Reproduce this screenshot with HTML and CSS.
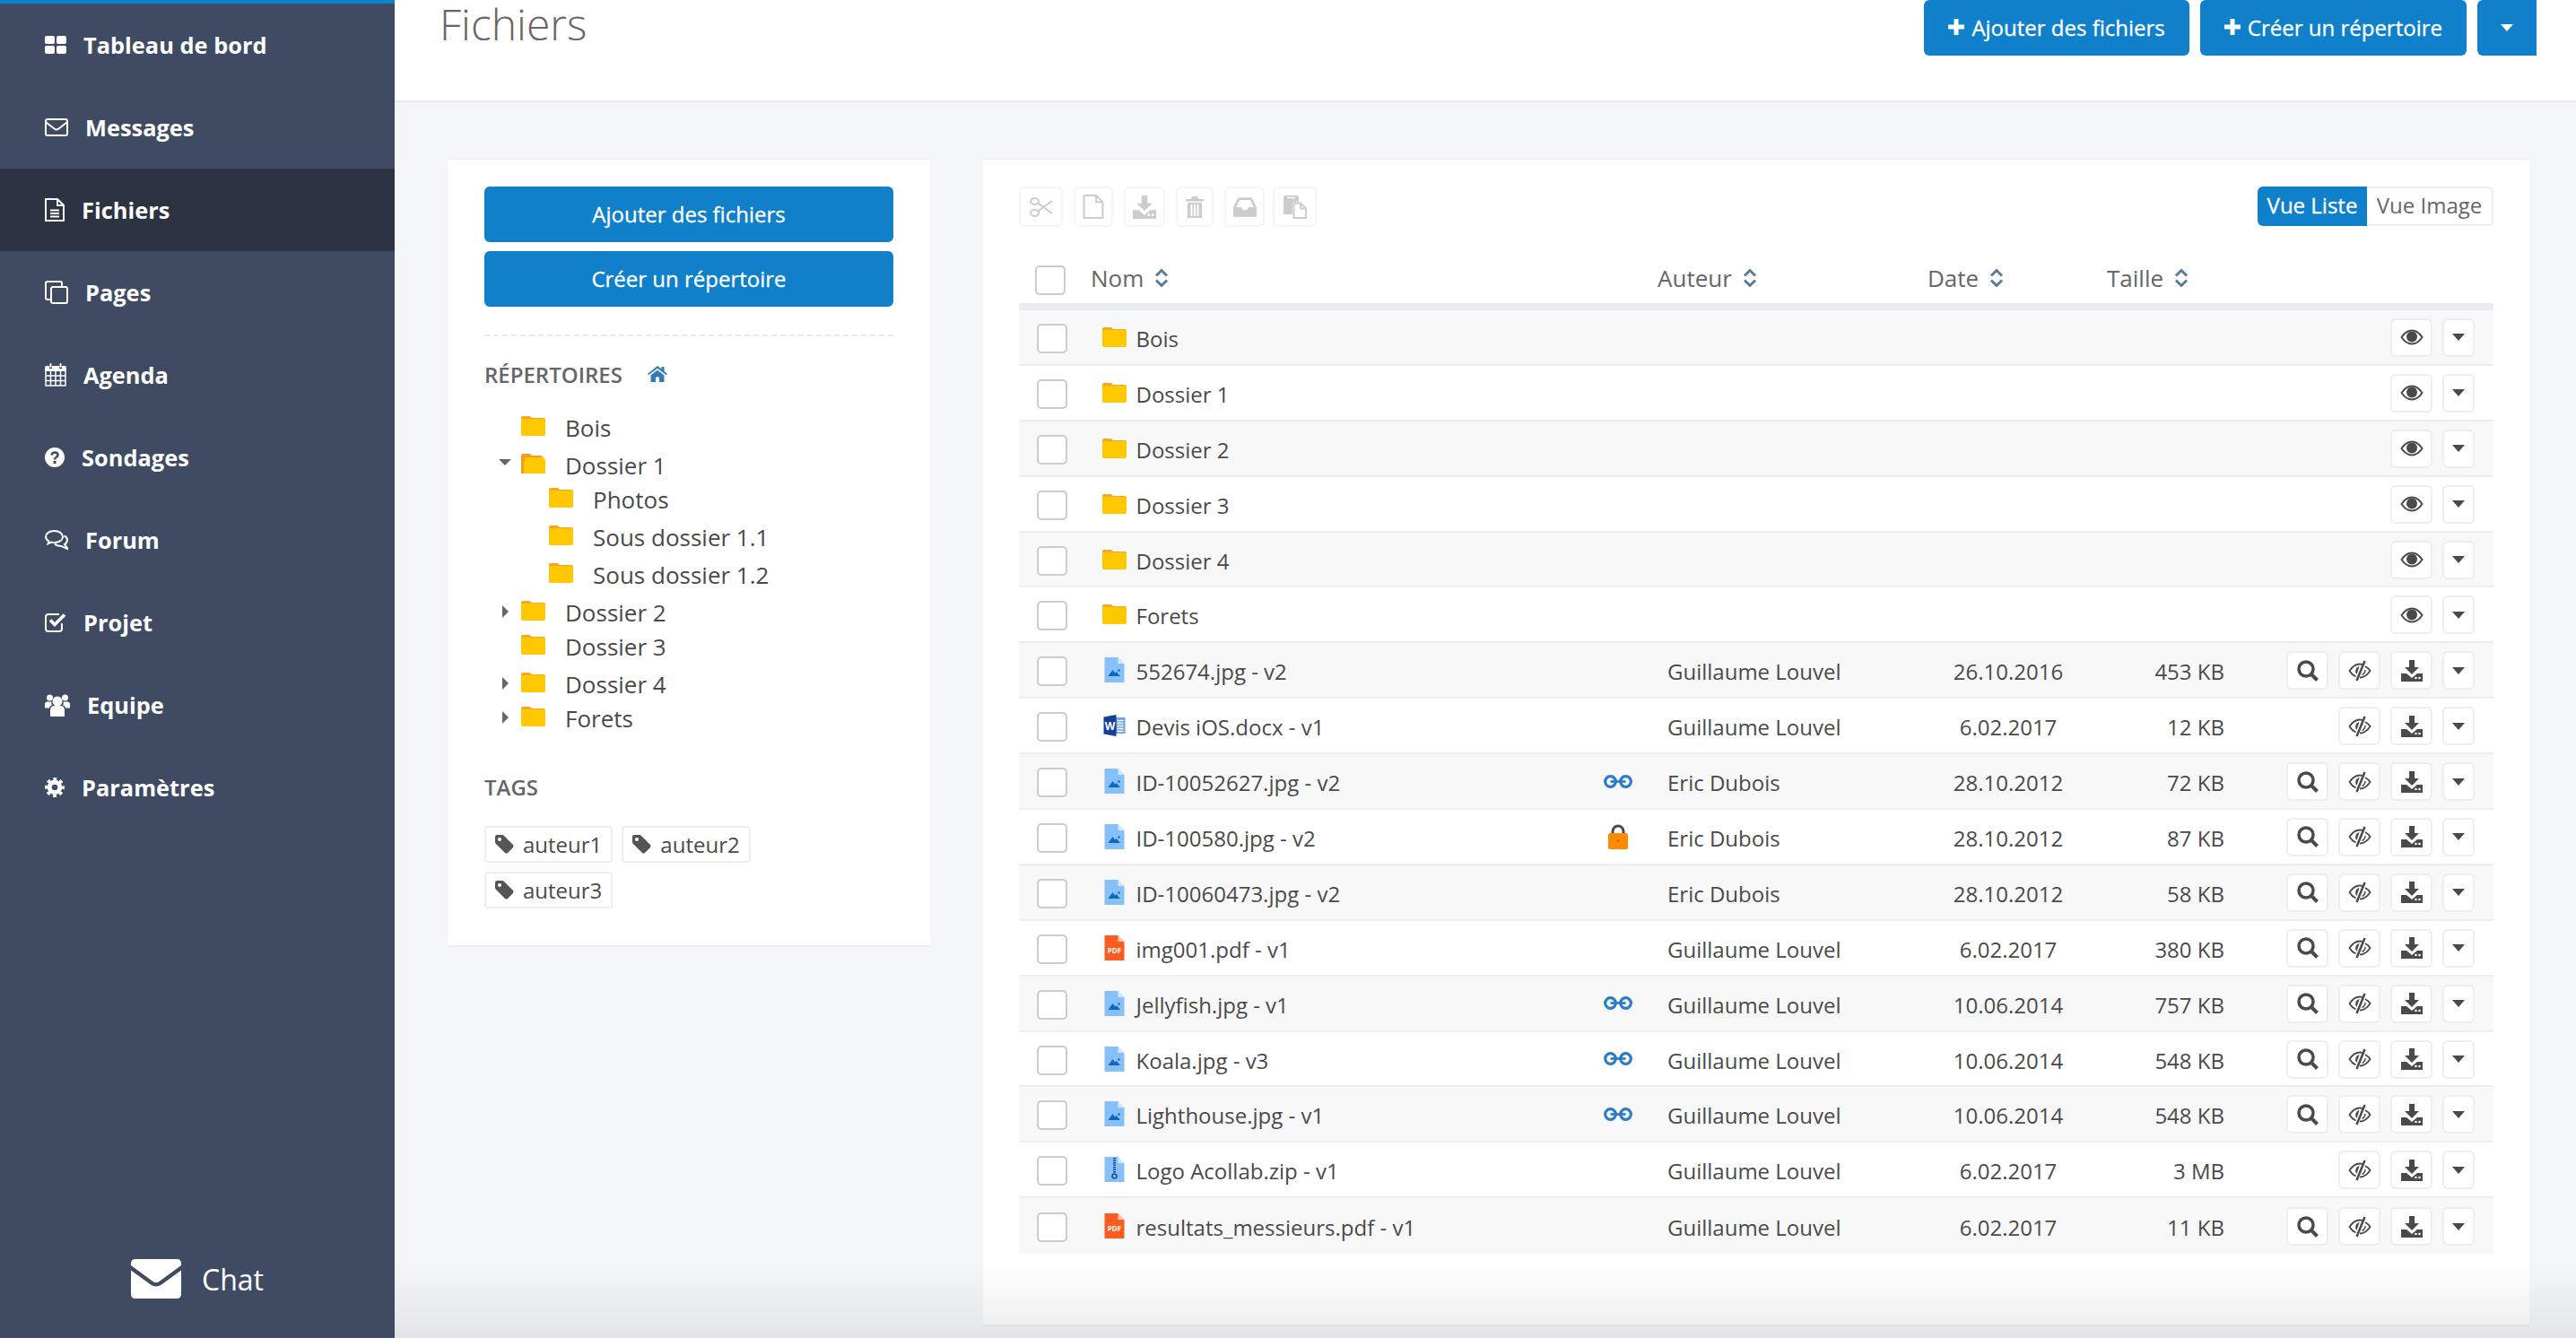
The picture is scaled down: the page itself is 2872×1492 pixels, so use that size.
FILE: index.html
```html
<!DOCTYPE html>
<html lang="fr">
<head>
    <meta charset="UTF-8">
    <title>Fichiers</title>
    <link rel="stylesheet" href="styles.css">
</head>
<body>
    <svg class="icon-defs" xmlns="http://www.w3.org/2000/svg">
        <symbol id="i-dash" viewBox="0 0 24 20"><rect width="11" height="9" rx="2"/><rect x="13" width="11" height="9" rx="2"/><rect y="11" width="11" height="9" rx="2"/><rect x="13" y="11" width="11" height="9" rx="2"/></symbol>
        <symbol id="i-mail" viewBox="0 0 26 20"><rect x="1" y="1" width="24" height="18" rx="2" fill="none" stroke="#fff" stroke-width="2"/><path d="M1.5 4.5L10.5 11.5Q13 13.5 15.5 11.5L24.5 4.5" fill="none" stroke="#fff" stroke-width="2"/></symbol>
        <symbol id="i-file" viewBox="0 0 22 26"><path d="M1 1H14L21 8V25H1Z" fill="none" stroke="#fff" stroke-width="2"/><path d="M14 1V8H21M6 13.5H16M6 17H16M6 20.5H16" fill="none" stroke="#fff" stroke-width="1.8"/></symbol>
        <symbol id="i-pages" viewBox="0 0 26 26"><path d="M6 21H3Q1 21 1 19V3Q1 1 3 1H17Q19 1 19 3V6" fill="none" stroke="#fff" stroke-width="2"/><rect x="7" y="7" width="18" height="18" rx="2" fill="none" stroke="#fff" stroke-width="2"/></symbol>
        <symbol id="i-cal" viewBox="0 0 24 26"><path d="M2 3H5V6H8V3H16V6H19V3H22Q24 3 24 5V9H0V5Q0 3 2 3Z"/><rect x="5.5" width="2" height="5" rx="1"/><rect x="16.5" width="2" height="5" rx="1"/><path d="M1 9V25H23V9M1 14H23M1 19.500H23M6.500 9V25M12 9V25M17.500 9V25" fill="none" stroke="#fff" stroke-width="1.500"/></symbol>
        <symbol id="i-help" viewBox="0 0 22 22"><circle cx="11" cy="11" r="11"/><path d="M7.500 8.500Q8 5.500 11 5.500Q14.500 5.500 14.500 8.300Q14.500 10 12.500 11Q11 11.800 11 13.500" fill="none" stroke="#3f4b63" stroke-width="2.500"/><rect x="9.500" y="15" width="3" height="3" fill="#3f4b63"/></symbol>
        <symbol id="i-forum" viewBox="0 0 26 22"><path d="M10.500 1C5 1 1 4 1 7.500C1 9.800 2.500 11.500 4.500 12.700L3.500 15.300L7.300 13.600C8.300 13.900 9.400 14 10.500 14C16 14 20 11 20 7.500C20 4 16 1 10.500 1Z" fill="none" stroke="#fff" stroke-width="2"/><path d="M21.500 6.500C24 7.500 25 9.500 25 11.300C25 13.300 23.800 15 22 16L26 21.500L18.500 18C15 18 12.500 17 11 15.500" fill="none" stroke="#fff" stroke-width="2"/></symbol>
        <symbol id="i-check" viewBox="0 0 24 22"><path d="M19 12V18Q19 21 16 21H4Q1 21 1 18V5Q1 2 4 2H16" fill="none" stroke="#fff" stroke-width="2"/><path d="M6 8.500L11 13.500L22 2.500" fill="none" stroke="#fff" stroke-width="3.600"/></symbol>
        <symbol id="i-team" viewBox="0 0 28 26"><circle cx="14" cy="9" r="5.500"/><circle cx="5.500" cy="5" r="3.500"/><circle cx="22.500" cy="5" r="3.500"/><path d="M6 26V19Q6 14 11 14H17Q22 14 22 19V26Z"/><path d="M5 16.500H0V12.500Q0 9.500 3 9.500H7.500Q7 13 8 13.500Q5 14 5 16.500ZM23 16.500H28V12.500Q28 9.500 25 9.500H20.500Q21 13 20 13.500Q23 14 23 16.500Z"/></symbol>
        <symbol id="i-cog" viewBox="0 0 22 22"><circle cx="11" cy="11" r="5.800" fill="none" stroke="#fff" stroke-width="5"/><circle cx="11" cy="11" r="9.300" fill="none" stroke="#fff" stroke-width="3.400" stroke-dasharray="3.800 3.500" stroke-dashoffset="1.900"/></symbol>
        <symbol id="i-folder" viewBox="0 0 27 22"><path d="M0 2Q0 0 2 0H9Q10.500 0 12 2H25Q27 2 27 4V8H0Z" fill="#f5a623"/><path d="M0 3H25Q27 3 27 5V20Q27 22 25 22H1.500Q0 22 0 20Z" fill="#ffc800"/></symbol>
        <symbol id="i-folder-open" viewBox="0 0 27 22"><path d="M0 2Q0 0 2 0H9Q10.500 0 12 2H22Q24 2 24 4V8H0V22H0Z" fill="#f79a1e"/><path d="M0 22V8Q1 4 5 4H23Q27 4 27 9V22Z" fill="#ffc800"/><path d="M0 22V5H6Q3 7 3 12V22Z" fill="#f79a1e"/></symbol>
        <symbol id="i-img" viewBox="0 0 22 28"><path d="M0 0H15L22 7V28H0Z" fill="#86c0f8"/><path d="M15 0L22 7H15Z" fill="#d6e9fc"/><path d="M4 21L9 14L11.500 17.500L13 16L17.500 21Z" fill="#1565c0"/><circle cx="16" cy="14.500" r="1.200" fill="#1565c0"/></symbol>
        <symbol id="i-zip" viewBox="0 0 22 28"><path d="M0 0H15L22 7V28H0Z" fill="#86c0f8"/><path d="M15 0L22 7H15Z" fill="#d6e9fc"/><path d="M11 1V18" fill="none" stroke="#1d4f9c" stroke-width="3" stroke-dasharray="1.500 1"/><circle cx="11" cy="21.500" r="2.500" fill="none" stroke="#1d4f9c" stroke-width="1.600"/></symbol>
        <symbol id="i-pdf" viewBox="0 0 22 28"><path d="M0 0H15L22 7V28H0Z" fill="#ff5a1f"/><path d="M15 0L22 7H15Z" fill="#ffc9b3"/><text x="11" y="19.500" text-anchor="middle" font-family="Open Sans" font-weight="700" font-size="8" fill="#fff">PDF</text></symbol>
        <symbol id="i-word" viewBox="0 0 24 24"><path d="M8 3H24V21H8Z" fill="#6f9fe0"/><path d="M15 6.500H22M15 9.500H22M15 12.500H22M15 15.500H22M15 18.500H22" stroke="#fff" stroke-width="1.300"/><path d="M0 2.500L14 0V24L0 21.500Z" fill="#123f9b"/><text x="7" y="16.500" text-anchor="middle" font-family="Open Sans" font-weight="700" font-size="12" fill="#fff">W</text></symbol>
        <symbol id="i-home" viewBox="0 0 22 18"><path d="M11 0L15.500 3.500V1H18.500V6L22 9L20.800 10.300L11 2.700L1.200 10.300L0 9Z"/><path d="M3.500 10.500L11 4.700L18.500 10.500V18H13V12.500H9V18H3.500Z"/></symbol>
        <symbol id="i-tag" viewBox="0 0 21 21"><path d="M0 2Q0 0 2 0H8Q9 0 10 1L20 11Q21 12.500 20 14L14 20Q12.500 21 11 20L1 10Q0 9 0 8Z"/><circle cx="5" cy="5" r="2" fill="#fff"/></symbol>
        <symbol id="i-sort" viewBox="0 0 16 22"><path d="M2 8.500L8 2.500L14 8.500M2 13.500L8 19.500L14 13.500" fill="none" stroke="#5b7b96" stroke-width="3"/></symbol>
        <symbol id="i-link" viewBox="0 0 32 14"><circle cx="8" cy="7" r="5.500" fill="none" stroke="#2a7cc7" stroke-width="3"/><circle cx="24" cy="7" r="5.500" fill="none" stroke="#2a7cc7" stroke-width="3"/><path d="M8 7H24" stroke="#2a7cc7" stroke-width="2.500"/></symbol>
        <symbol id="i-lock" viewBox="0 0 22 28"><path d="M5 11V8A6 6 0 0 1 17 8V11" fill="none" stroke="#4a4a4a" stroke-width="3"/><rect y="10" width="22" height="18" rx="2" fill="#ff8c00"/><circle cx="11" cy="18.500" r="1.500" fill="#c96a00"/></symbol>
        <symbol id="i-eye" viewBox="0 0 26 18"><path d="M1.500 9Q6.500 1.500 13 1.500Q19.500 1.500 24.500 9Q19.500 16.500 13 16.500Q6.500 16.500 1.500 9Z" fill="none" stroke="#4a4a4a" stroke-width="2"/><circle cx="13" cy="8.500" r="6"/></symbol>
        <symbol id="i-eye-off" viewBox="0 0 26 24"><path d="M8.500 18.500Q4 16.500 1.500 12Q6.500 4.500 13 4.500Q14.500 4.500 16 5M19 7Q22.500 9 24.500 12Q19.500 19.500 13 19.500" fill="none" stroke="#4a4a4a" stroke-width="1.800"/><path d="M12.500 7A5.500 5.500 0 0 0 9.500 16Z"/><path d="M19 11Q19 14.500 15.500 16.500" fill="none" stroke="#4a4a4a" stroke-width="1.500"/><path d="M18.500 1L9.500 23" stroke="#4a4a4a" stroke-width="2.500"/></symbol>
        <symbol id="i-download" viewBox="0 0 24 24"><path d="M9 0H15V8H20L12 16L4 8H9Z"/><path d="M0 15H6L12 20L18 15H24V24H0Z"/><circle cx="16.500" cy="20" r="1.300" fill="#fff"/><circle cx="20.500" cy="20" r="1.300" fill="#fff"/></symbol>
        <symbol id="i-search" viewBox="0 0 24 24"><circle cx="10" cy="10" r="8" fill="none" stroke="#4a4a4a" stroke-width="3.500"/><path d="M15.500 15.500L22.500 22.500" stroke="#4a4a4a" stroke-width="4"/></symbol>
        <symbol id="i-caret" viewBox="0 0 14 8"><path d="M0 0H14L7 8Z"/></symbol>
        <symbol id="i-plus" viewBox="0 0 18 18"><path d="M6.500 0H11.500V6.500H18V11.500H11.500V18H6.500V11.500H0V6.500H6.500Z"/></symbol>
        <symbol id="i-cut" viewBox="0 0 26 24"><ellipse cx="5.500" cy="5.500" rx="4.500" ry="3.500" fill="none" stroke="#ccc" stroke-width="2"/><ellipse cx="5.500" cy="18.500" rx="4.500" ry="3.500" fill="none" stroke="#ccc" stroke-width="2"/><path d="M9 7.500L25 19M9 16.500L25 5" fill="none" stroke="#ccc" stroke-width="2"/></symbol>
        <symbol id="i-blank" viewBox="0 0 22 26"><path d="M1 1H14L21 8V25H1Z" fill="none" stroke="#ccc" stroke-width="2"/><path d="M14 1V8H21" fill="none" stroke="#ccc" stroke-width="2"/></symbol>
        <symbol id="i-trash" viewBox="0 0 20 24"><path d="M7 0H13L14 3H20V5.500H0V3H6Z"/><path d="M2 7H18V24H2ZM5.500 9V22H7.500V9ZM9 9V22H11V9ZM12.500 9V22H14.500V9Z" fill-rule="evenodd"/></symbol>
        <symbol id="i-inbox" viewBox="0 0 24 20"><path d="M5 0H19L24 10V20H0V10ZM6.500 2.500L3 10H8L10 13H14L16 10H21L17.500 2.500Z" fill-rule="evenodd"/></symbol>
        <symbol id="i-paste" viewBox="0 0 26 26"><path d="M0 2Q0 0 2 0H15Q17 0 17 2V7H10V21H0Z"/><path d="M4 2.500H13" stroke="#fff" stroke-width="1.500"/><path d="M11.500 8.500H19L25 14.500V25H11.500Z" fill="#fff" stroke="#ccc" stroke-width="2"/><path d="M19 8.500V14.500H25" fill="none" stroke="#ccc" stroke-width="2"/></symbol>
        <symbol id="i-chat" viewBox="0 0 56 44"><path d="M5 0H51Q56 0 56 5V7L31.500 25Q28 27.500 24.500 25L0 7V5Q0 0 5 0Z"/><path d="M0 12.500L22 28.500Q28 32.500 34 28.500L56 12.500V39Q56 44 51 44H5Q0 44 0 39Z"/></symbol>
    </svg>

    <div class="app">
        <aside class="sidebar">
            <nav class="side-nav">
                <a class="side-item"><svg class="side-icon w24"><use href="#i-dash"/></svg>Tableau de bord</a>
                <a class="side-item"><svg class="side-icon w26"><use href="#i-mail"/></svg>Messages</a>
                <a class="side-item active"><svg class="side-icon w22"><use href="#i-file"/></svg>Fichiers</a>
                <a class="side-item"><svg class="side-icon w26"><use href="#i-pages"/></svg>Pages</a>
                <a class="side-item"><svg class="side-icon w24"><use href="#i-cal"/></svg>Agenda</a>
                <a class="side-item"><svg class="side-icon w22"><use href="#i-help"/></svg>Sondages</a>
                <a class="side-item"><svg class="side-icon w26"><use href="#i-forum"/></svg>Forum</a>
                <a class="side-item"><svg class="side-icon w24"><use href="#i-check"/></svg>Projet</a>
                <a class="side-item"><svg class="side-icon w28"><use href="#i-team"/></svg>Equipe</a>
                <a class="side-item"><svg class="side-icon w22"><use href="#i-cog"/></svg>Paramètres</a>
            </nav>
            <div class="chat"><svg class="chat-icon"><use href="#i-chat"/></svg>Chat</div>
        </aside>

        <main class="main">
            <header class="page-head">
                <h1>Fichiers</h1>
                <div class="head-actions">
                    <button class="btn"><svg class="plus"><use href="#i-plus"/></svg>Ajouter des fichiers</button>
                    <button class="btn"><svg class="plus"><use href="#i-plus"/></svg>Créer un répertoire</button>
                    <button class="btn btn-caret"><svg class="caret-icon"><use href="#i-caret"/></svg></button>
                </div>
            </header>

            <div class="content">
                <section class="card side-card">
                    <button class="btn btn-block">Ajouter des fichiers</button>
                    <button class="btn btn-block">Créer un répertoire</button>
                    <div class="dash-line"></div>

                    <h3 class="side-title">Répertoires <svg class="home"><use href="#i-home"/></svg></h3>
                    <ul class="tree">
                        <li class="tree-row"><svg class="folder"><use href="#i-folder"/></svg>Bois</li>
                        <li class="tree-row gap"><i class="tree-down"></i><svg class="folder"><use href="#i-folder-open"/></svg>Dossier 1</li>
                        <li class="tree-row sub"><svg class="folder"><use href="#i-folder"/></svg>Photos</li>
                        <li class="tree-row sub gap"><svg class="folder"><use href="#i-folder"/></svg>Sous dossier 1.1</li>
                        <li class="tree-row sub gap"><svg class="folder"><use href="#i-folder"/></svg>Sous dossier 1.2</li>
                        <li class="tree-row gap"><i class="tree-right"></i><svg class="folder"><use href="#i-folder"/></svg>Dossier 2</li>
                        <li class="tree-row"><svg class="folder"><use href="#i-folder"/></svg>Dossier 3</li>
                        <li class="tree-row gap"><i class="tree-right"></i><svg class="folder"><use href="#i-folder"/></svg>Dossier 4</li>
                        <li class="tree-row"><i class="tree-right"></i><svg class="folder"><use href="#i-folder"/></svg>Forets</li>
                    </ul>

                    <h3 class="side-title tags-title">Tags</h3>
                    <div class="tags">
                        <span class="tag"><svg class="tag-icon"><use href="#i-tag"/></svg>auteur1</span>
                        <span class="tag"><svg class="tag-icon"><use href="#i-tag"/></svg>auteur2</span>
                        <span class="tag"><svg class="tag-icon"><use href="#i-tag"/></svg>auteur3</span>
                    </div>
                </section>

                <section class="card list-card">
                    <div class="toolbar">
                        <div class="tools">
                            <span class="tool t1"><svg class="tool-icon"><use href="#i-cut"/></svg></span>
                            <span class="tool t2"><svg class="tool-icon"><use href="#i-blank"/></svg></span>
                            <span class="tool t3"><svg class="tool-icon"><use href="#i-download"/></svg></span>
                            <span class="tool t4"><svg class="tool-icon"><use href="#i-trash"/></svg></span>
                            <span class="tool t5"><svg class="tool-icon"><use href="#i-inbox"/></svg></span>
                            <span class="tool t6"><svg class="tool-icon"><use href="#i-paste"/></svg></span>
                        </div>
                        <div class="switch">
                            <span class="switch-on">Vue Liste</span>
                            <span class="switch-off">Vue Image</span>
                        </div>
                    </div>

                    <div class="list-head">
                        <span class="box head-box"></span>
                        <span class="th">Nom <svg class="sort"><use href="#i-sort"/></svg></span>
                        <span class="th">Auteur <svg class="sort"><use href="#i-sort"/></svg></span>
                        <span class="th">Date <svg class="sort"><use href="#i-sort"/></svg></span>
                        <span class="th">Taille <svg class="sort"><use href="#i-sort"/></svg></span>
                    </div>

                    <div class="rows">
                        <div class="row">
                            <span class="box"></span>
                            <span class="name"><svg class="kind"><use href="#i-folder"/></svg>Bois</span>
                            <span></span><span></span><span></span><span></span>
                            <span class="acts"><b class="act"><svg class="eye"><use href="#i-eye"/></svg></b><b class="act act-c"><svg class="caret-icon"><use href="#i-caret"/></svg></b></span>
                        </div>
                        <div class="row">
                            <span class="box"></span>
                            <span class="name"><svg class="kind"><use href="#i-folder"/></svg>Dossier 1</span>
                            <span></span><span></span><span></span><span></span>
                            <span class="acts"><b class="act"><svg class="eye"><use href="#i-eye"/></svg></b><b class="act act-c"><svg class="caret-icon"><use href="#i-caret"/></svg></b></span>
                        </div>
                        <div class="row">
                            <span class="box"></span>
                            <span class="name"><svg class="kind"><use href="#i-folder"/></svg>Dossier 2</span>
                            <span></span><span></span><span></span><span></span>
                            <span class="acts"><b class="act"><svg class="eye"><use href="#i-eye"/></svg></b><b class="act act-c"><svg class="caret-icon"><use href="#i-caret"/></svg></b></span>
                        </div>
                        <div class="row">
                            <span class="box"></span>
                            <span class="name"><svg class="kind"><use href="#i-folder"/></svg>Dossier 3</span>
                            <span></span><span></span><span></span><span></span>
                            <span class="acts"><b class="act"><svg class="eye"><use href="#i-eye"/></svg></b><b class="act act-c"><svg class="caret-icon"><use href="#i-caret"/></svg></b></span>
                        </div>
                        <div class="row">
                            <span class="box"></span>
                            <span class="name"><svg class="kind"><use href="#i-folder"/></svg>Dossier 4</span>
                            <span></span><span></span><span></span><span></span>
                            <span class="acts"><b class="act"><svg class="eye"><use href="#i-eye"/></svg></b><b class="act act-c"><svg class="caret-icon"><use href="#i-caret"/></svg></b></span>
                        </div>
                        <div class="row">
                            <span class="box"></span>
                            <span class="name"><svg class="kind"><use href="#i-folder"/></svg>Forets</span>
                            <span></span><span></span><span></span><span></span>
                            <span class="acts"><b class="act"><svg class="eye"><use href="#i-eye"/></svg></b><b class="act act-c"><svg class="caret-icon"><use href="#i-caret"/></svg></b></span>
                        </div>
                        <div class="row">
                            <span class="box"></span>
                            <span class="name"><svg class="kind file"><use href="#i-img"/></svg>552674.jpg - v2</span>
                            <span></span>
                            <span class="author">Guillaume Louvel</span><span class="date">26.10.2016</span><span class="size">453 KB</span>
                            <span class="acts"><b class="act"><svg class="mag"><use href="#i-search"/></svg></b><b class="act"><svg class="eye-off"><use href="#i-eye-off"/></svg></b><b class="act"><svg class="dl"><use href="#i-download"/></svg></b><b class="act act-c"><svg class="caret-icon"><use href="#i-caret"/></svg></b></span>
                        </div>
                        <div class="row">
                            <span class="box"></span>
                            <span class="name"><svg class="kind word"><use href="#i-word"/></svg>Devis iOS.docx - v1</span>
                            <span></span>
                            <span class="author">Guillaume Louvel</span><span class="date">6.02.2017</span><span class="size">12 KB</span>
                            <span class="acts"><b class="act"><svg class="eye-off"><use href="#i-eye-off"/></svg></b><b class="act"><svg class="dl"><use href="#i-download"/></svg></b><b class="act act-c"><svg class="caret-icon"><use href="#i-caret"/></svg></b></span>
                        </div>
                        <div class="row">
                            <span class="box"></span>
                            <span class="name"><svg class="kind file"><use href="#i-img"/></svg>ID-10052627.jpg - v2</span>
                            <span class="flag"><svg class="link"><use href="#i-link"/></svg></span>
                            <span class="author">Eric Dubois</span><span class="date">28.10.2012</span><span class="size">72 KB</span>
                            <span class="acts"><b class="act"><svg class="mag"><use href="#i-search"/></svg></b><b class="act"><svg class="eye-off"><use href="#i-eye-off"/></svg></b><b class="act"><svg class="dl"><use href="#i-download"/></svg></b><b class="act act-c"><svg class="caret-icon"><use href="#i-caret"/></svg></b></span>
                        </div>
                        <div class="row">
                            <span class="box"></span>
                            <span class="name"><svg class="kind file"><use href="#i-img"/></svg>ID-100580.jpg - v2</span>
                            <span class="flag"><svg class="lock"><use href="#i-lock"/></svg></span>
                            <span class="author">Eric Dubois</span><span class="date">28.10.2012</span><span class="size">87 KB</span>
                            <span class="acts"><b class="act"><svg class="mag"><use href="#i-search"/></svg></b><b class="act"><svg class="eye-off"><use href="#i-eye-off"/></svg></b><b class="act"><svg class="dl"><use href="#i-download"/></svg></b><b class="act act-c"><svg class="caret-icon"><use href="#i-caret"/></svg></b></span>
                        </div>
                        <div class="row">
                            <span class="box"></span>
                            <span class="name"><svg class="kind file"><use href="#i-img"/></svg>ID-10060473.jpg - v2</span>
                            <span></span>
                            <span class="author">Eric Dubois</span><span class="date">28.10.2012</span><span class="size">58 KB</span>
                            <span class="acts"><b class="act"><svg class="mag"><use href="#i-search"/></svg></b><b class="act"><svg class="eye-off"><use href="#i-eye-off"/></svg></b><b class="act"><svg class="dl"><use href="#i-download"/></svg></b><b class="act act-c"><svg class="caret-icon"><use href="#i-caret"/></svg></b></span>
                        </div>
                        <div class="row">
                            <span class="box"></span>
                            <span class="name"><svg class="kind file"><use href="#i-pdf"/></svg>img001.pdf - v1</span>
                            <span></span>
                            <span class="author">Guillaume Louvel</span><span class="date">6.02.2017</span><span class="size">380 KB</span>
                            <span class="acts"><b class="act"><svg class="mag"><use href="#i-search"/></svg></b><b class="act"><svg class="eye-off"><use href="#i-eye-off"/></svg></b><b class="act"><svg class="dl"><use href="#i-download"/></svg></b><b class="act act-c"><svg class="caret-icon"><use href="#i-caret"/></svg></b></span>
                        </div>
                        <div class="row">
                            <span class="box"></span>
                            <span class="name"><svg class="kind file"><use href="#i-img"/></svg>Jellyfish.jpg - v1</span>
                            <span class="flag"><svg class="link"><use href="#i-link"/></svg></span>
                            <span class="author">Guillaume Louvel</span><span class="date">10.06.2014</span><span class="size">757 KB</span>
                            <span class="acts"><b class="act"><svg class="mag"><use href="#i-search"/></svg></b><b class="act"><svg class="eye-off"><use href="#i-eye-off"/></svg></b><b class="act"><svg class="dl"><use href="#i-download"/></svg></b><b class="act act-c"><svg class="caret-icon"><use href="#i-caret"/></svg></b></span>
                        </div>
                        <div class="row">
                            <span class="box"></span>
                            <span class="name"><svg class="kind file"><use href="#i-img"/></svg>Koala.jpg - v3</span>
                            <span class="flag"><svg class="link"><use href="#i-link"/></svg></span>
                            <span class="author">Guillaume Louvel</span><span class="date">10.06.2014</span><span class="size">548 KB</span>
                            <span class="acts"><b class="act"><svg class="mag"><use href="#i-search"/></svg></b><b class="act"><svg class="eye-off"><use href="#i-eye-off"/></svg></b><b class="act"><svg class="dl"><use href="#i-download"/></svg></b><b class="act act-c"><svg class="caret-icon"><use href="#i-caret"/></svg></b></span>
                        </div>
                        <div class="row">
                            <span class="box"></span>
                            <span class="name"><svg class="kind file"><use href="#i-img"/></svg>Lighthouse.jpg - v1</span>
                            <span class="flag"><svg class="link"><use href="#i-link"/></svg></span>
                            <span class="author">Guillaume Louvel</span><span class="date">10.06.2014</span><span class="size">548 KB</span>
                            <span class="acts"><b class="act"><svg class="mag"><use href="#i-search"/></svg></b><b class="act"><svg class="eye-off"><use href="#i-eye-off"/></svg></b><b class="act"><svg class="dl"><use href="#i-download"/></svg></b><b class="act act-c"><svg class="caret-icon"><use href="#i-caret"/></svg></b></span>
                        </div>
                        <div class="row">
                            <span class="box"></span>
                            <span class="name"><svg class="kind file"><use href="#i-zip"/></svg>Logo Acollab.zip - v1</span>
                            <span></span>
                            <span class="author">Guillaume Louvel</span><span class="date">6.02.2017</span><span class="size">3 MB</span>
                            <span class="acts"><b class="act"><svg class="eye-off"><use href="#i-eye-off"/></svg></b><b class="act"><svg class="dl"><use href="#i-download"/></svg></b><b class="act act-c"><svg class="caret-icon"><use href="#i-caret"/></svg></b></span>
                        </div>
                        <div class="row">
                            <span class="box"></span>
                            <span class="name"><svg class="kind file"><use href="#i-pdf"/></svg>resultats_messieurs.pdf - v1</span>
                            <span></span>
                            <span class="author">Guillaume Louvel</span><span class="date">6.02.2017</span><span class="size">11 KB</span>
                            <span class="acts"><b class="act"><svg class="mag"><use href="#i-search"/></svg></b><b class="act"><svg class="eye-off"><use href="#i-eye-off"/></svg></b><b class="act"><svg class="dl"><use href="#i-download"/></svg></b><b class="act act-c"><svg class="caret-icon"><use href="#i-caret"/></svg></b></span>
                        </div>
                    </div>
                </section>
            </div>
            <div class="bottom-fade"></div>
        </main>
    </div>
</body>
</html>
```

FILE: styles.css
```css
* {
    box-sizing: border-box;
}

body {
    margin: 0;
    height: 1492px;
    overflow: hidden;
    font-family: "Open Sans", "Noto Sans", sans-serif;
    color: #4a4a4a;
    background: #f4f6f9;
}

.icon-defs {
    display: none;
}

svg {
    fill: currentColor;
    flex: none;
}

.app {
    display: flex;
    height: 1492px;
}

/* sidebar */
.sidebar {
    width: 440px;
    flex: none;
    display: flex;
    flex-direction: column;
    background: #3f4b63;
    border-top: 4px solid #0d82cc;
    color: #fff;
}

.side-item {
    display: flex;
    align-items: center;
    gap: 19px;
    height: 92px;
    padding-left: 50px;
    font-size: 25.4px;
    font-weight: 700;
}

.side-item.active {
    background: #2c3342;
}

.side-icon {
    height: 26px;
}

.w22 { width: 22px; }
.w24 { width: 24px; }
.w26 { width: 26px; }
.w28 { width: 28px; }

.chat {
    margin-top: auto;
    padding-bottom: 44px;
    display: flex;
    align-items: center;
    justify-content: center;
    gap: 23px;
    font-size: 32px;
}

.chat-icon {
    width: 56px;
    height: 44px;
}

/* main area */
.main {
    flex: 1;
    position: relative;
    min-width: 0;
}

.page-head {
    height: 114px;
    display: flex;
    justify-content: space-between;
    background: #fff;
    border-bottom: 2px solid #e8eaee;
    padding: 0 44px 0 50px;
}

.page-head h1 {
    margin: 0;
    font-size: 48px;
    line-height: 54px;
    font-weight: 300;
    color: #666;
}

.head-actions {
    display: flex;
    gap: 12px;
}

.btn {
    height: 62px;
    padding: 0 27px 2px;
    border: 0;
    border-radius: 6px;
    background: #1080ca;
    color: #fff;
    font-family: inherit;
    font-size: 24px;
    -webkit-text-stroke: 0.3px #fff;
    display: flex;
    align-items: center;
    justify-content: center;
    gap: 8px;
}

.btn-caret {
    width: 66px;
    padding: 0;
    border-radius: 6px 0 0 6px;
}

.btn-block {
    width: 100%;
    margin-bottom: 10px;
}

.plus {
    width: 18px;
    height: 18px;
}

.caret-icon {
    width: 14px;
    height: 8px;
}

.content {
    display: flex;
    align-items: flex-start;
    gap: 59px;
    padding: 63px 52px 0 60px;
}

.card {
    background: #fff;
    border-top: 1px solid #eceef2;
    border-bottom: 2px solid #eceef2;
}

/* left column */
.side-card {
    width: 537px;
    height: 879px;
    flex: none;
    padding: 30px 41px 0 40px;
}

.dash-line {
    margin-top: 31px;
    border-top: 2px dashed #e8e8e8;
}

.side-title {
    margin: 22px 0 0;
    height: 40px;
    display: flex;
    align-items: center;
    font-size: 24px;
    font-weight: 600;
    color: #666;
    text-transform: uppercase;
}

.home {
    width: 22px;
    height: 18px;
    margin-left: 28px;
    color: #337ab7;
}

.tree {
    list-style: none;
    margin: 21px 0 0;
    padding: 0;
}

.tree-row {
    position: relative;
    display: flex;
    align-items: center;
    gap: 22px;
    height: 38px;
    padding-left: 41px;
    font-size: 26px;
    line-height: 38px;
}

.tree-row.sub {
    padding-left: 72px;
}

.tree-row.gap {
    margin-top: 4px;
}

.folder {
    width: 27px;
    height: 22px;
    margin-top: -4px;
}

.tree-down,
.tree-right {
    position: absolute;
    width: 0;
    height: 0;
}

.tree-down {
    left: 16px;
    top: 12px;
    border-left: 7px solid transparent;
    border-right: 7px solid transparent;
    border-top: 7px solid #666;
}

.tree-right {
    left: 20px;
    top: 11px;
    border-top: 7px solid transparent;
    border-bottom: 7px solid transparent;
    border-left: 7px solid #666;
}

.side-title.tags-title {
    margin-top: 37px;
}

.tags {
    display: flex;
    flex-wrap: wrap;
    gap: 10px;
    margin-top: 24px;
    width: 320px;
}

.tag {
    display: flex;
    align-items: center;
    gap: 10px;
    height: 41px;
    padding: 0 10px;
    border: 2px solid #eee;
    border-radius: 4px;
    font-size: 24px;
}

.tag-icon {
    width: 21px;
    height: 21px;
    color: #555;
}

/* right column */
.list-card {
    flex: 1;
    height: 1302px;
    padding: 30px 40px 0;
}

.toolbar {
    display: flex;
    justify-content: space-between;
    height: 45px;
}

.tools {
    display: flex;
    gap: 12px;
}

.tool {
    height: 45px;
    display: flex;
    align-items: center;
    justify-content: center;
    border: 2px solid #f5f5f5;
    border-radius: 6px;
    color: #ccc;
}

.tool-icon {
    width: 26px;
    height: 26px;
}

.t1 { width: 49px; }
.t2 { width: 44px; }
.t3 { width: 46px; }
.t4 { width: 42px; }
.t5 { width: 45px; }
.t6 { width: 49px; margin-left: -3px; }

.t4 .tool-icon {
    height: 24px;
}

.t2 .tool-icon {
    height: 27px;
}

.switch {
    display: flex;
    height: 44px;
    font-size: 24px;
    line-height: 42px;
}

.switch-on {
    width: 122px;
    text-align: center;
    background: #1080ca;
    color: #fff;
    -webkit-text-stroke: 0.3px #fff;
    border-radius: 6px 0 0 6px;
}

.switch-off {
    width: 141px;
    text-align: center;
    line-height: 38px;
    border: 2px solid #eee;
    border-left: 0;
    border-radius: 0 6px 6px 0;
    color: #666;
}

.list-head {
    display: grid;
    grid-template-columns: 80px 632px 301px 200px 1fr;
    align-items: center;
    height: 58px;
    margin-top: 27px;
    padding-top: 2px;
    font-size: 26px;
    color: #666;
}

.th {
    display: flex;
    align-items: center;
    gap: 12px;
}

.sort {
    width: 16px;
    height: 22px;
}

.box {
    display: block;
    width: 34px;
    height: 33px;
    margin-left: 20px;
    background: #fff;
    border: 2px solid #ccc;
    border-radius: 5px;
}

.head-box {
    margin-left: 18px;
    margin-top: 4px;
}

.rows {
    border-top: 8px solid #e9edf0;
}

.row {
    display: grid;
    grid-template-columns: 93px 541px 68px 302px 198px 142px 300px;
    align-items: center;
    height: 61.9px;
    padding-top: 3px;
    border-bottom: 2px solid #eee;
    font-size: 24px;
}

.row:nth-child(odd) {
    background: #f8f8f8;
}

.row:last-child {
    border-bottom: 0;
}

.name {
    display: flex;
    align-items: center;
    gap: 10.5px;
}

.kind {
    width: 27px;
    height: 22px;
    margin-top: -3px;
}

.kind.file {
    height: 28px;
}

.kind.word {
    height: 24px;
}

.flag {
    display: flex;
    justify-content: center;
    margin-top: -3px;
}

.link {
    width: 34px;
    height: 15px;
}

.lock {
    width: 22px;
    height: 28px;
}

.author {
    padding-left: 21px;
}

.date {
    text-align: center;
}

.size {
    text-align: right;
}

.acts {
    display: flex;
    justify-content: flex-end;
    align-items: center;
    gap: 11px;
    margin-top: -2px;
    padding-right: 21px;
}

.act {
    width: 47px;
    height: 43px;
    display: flex;
    align-items: center;
    justify-content: center;
    background: #fff;
    border: 2px solid #eee;
    border-radius: 6px;
}

.act-c {
    width: 36px;
}

.eye {
    width: 26px;
    height: 18px;
}

.eye-off {
    width: 26px;
    height: 24px;
}

.dl {
    width: 24px;
    height: 24px;
}

.mag {
    width: 24px;
    height: 24px;
}

.bottom-fade {
    position: absolute;
    left: 0;
    right: 0;
    bottom: 0;
    height: 84px;
    background: linear-gradient(rgba(0, 0, 0, 0), rgba(0, 0, 0, 0.07));
    pointer-events: none;
}
```
